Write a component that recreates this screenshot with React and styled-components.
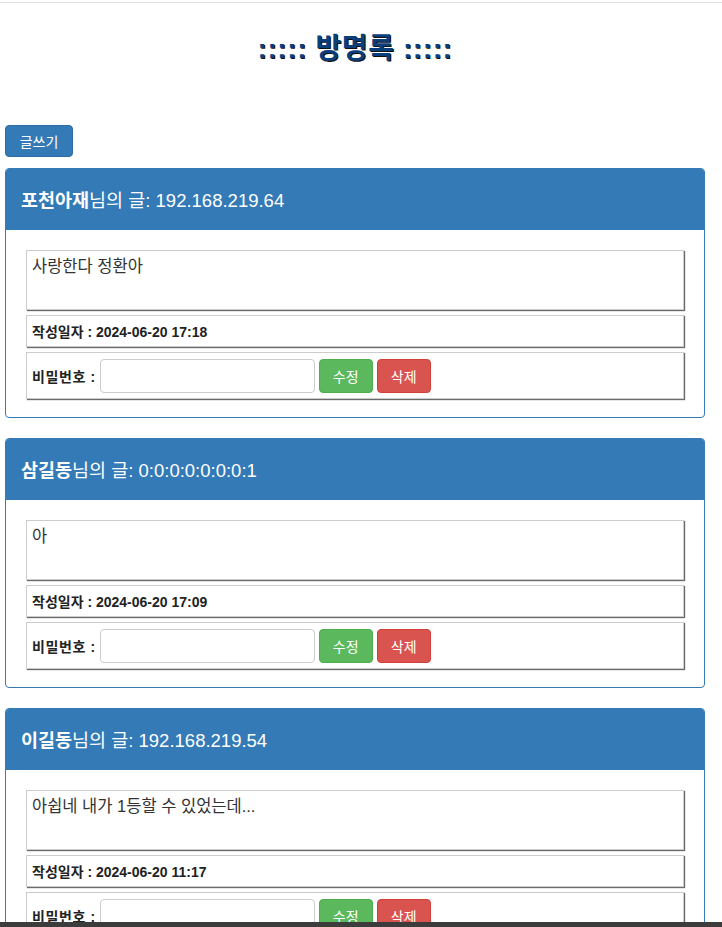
import React from 'react';
import styled, {createGlobalStyle} from 'styled-components';

const Global = createGlobalStyle`
  body {
    margin: 0;
    background: #fff;
    font-family: "Liberation Sans", "Noto Sans CJK KR", sans-serif;
    font-size: 14px;
    color: #333;
  }
`;

const TopRule = styled.div`
  margin-top: 2px;
  height: 1px;
  background: #e2e2e2;
`;

const Page = styled.div`
  width: 700px;
  margin: 0 5px;
`;

const Title = styled.h1`
  margin: 27px 0 0;
  height: 38px;
  text-align: center;
  font-size: 28px;
  letter-spacing: 0.6px;
  line-height: 38px;
  font-weight: bold;
  color: #0b3f7c;
  text-shadow: 1px 1px 0 #111;
`;

const WriteButton = styled.button`
  margin-top: 57px;
  width: 68px;
  height: 32px;
  border: 1px solid #2e6da4;
  border-radius: 4px;
  background: #337ab7;
  color: #fff;
  font: 14px "Liberation Sans", "Noto Sans CJK KR", sans-serif;
  padding: 0;
`;

const List = styled.div`
  margin-top: 11px;
  display: flex;
  flex-direction: column;
  gap: 20px;
`;

const Panel = styled.section`
  border: 1px solid #337ab7;
  border-radius: 4px;
  overflow: hidden;
`;

const PanelHeading = styled.header`
  height: 61px;
  display: flex;
  align-items: center;
  padding: 0 15px 2px;
  box-sizing: border-box;
  background: #337ab7;
  color: #fff;
  font-size: 18.5px;

  b {
    font-weight: bold;
  }
`;

const PanelBody = styled.div`
  padding: 20px 20px 18px;
  display: flex;
  flex-direction: column;
  gap: 5px;
`;

const Box = styled.div`
  border: 1px solid #ccc;
  box-shadow: 1px 1px 1px #6a6a6a;
  min-height: ${p => p.$h}px;
  box-sizing: border-box;
  display: flex;
  align-items: ${p => (p.$top ? 'flex-start' : 'center')};
  padding: ${p => (p.$top ? '5px 5px' : '0 5px')};
  gap: 4px;
`;

const Content = styled.div`
  font-size: 16.5px;
  line-height: 20px;
`;

const Meta = styled.div`
  font-size: 14px;
  font-weight: bold;
  color: #222;
`;

const Label = styled.label`
  font-size: 14px;
  letter-spacing: 0.6px;
  font-weight: bold;
  color: #222;
`;

const Input = styled.input`
  width: 215px;
  height: 34px;
  box-sizing: border-box;
  border: 1px solid #ccc;
  border-radius: 4px;
  padding: 6px 10px;
`;

const ActionButton = styled.button`
  width: 54px;
  height: 34px;
  border: 1px solid ${p => (p.$danger ? '#d43f3a' : '#4cae4c')};
  border-radius: 4px;
  background: ${p => (p.$danger ? '#d9534f' : '#5cb85c')};
  color: #fff;
  font: 14px "Liberation Sans", "Noto Sans CJK KR", sans-serif;
  padding: 0;
`;

const BottomBar = styled.div`
  position: fixed;
  left: 0;
  right: 0;
  bottom: 0;
  height: 5px;
  background: #3c3c3c;
`;

const posts = [
  {name: '포천아재', ip: '192.168.219.64', text: '사랑한다 정환아', date: '2024-06-20 17:18'},
  {name: '삼길동', ip: '0:0:0:0:0:0:0:1', text: '아', date: '2024-06-20 17:09'},
  {name: '이길동', ip: '192.168.219.54', text: '아쉽네 내가 1등할 수 있었는데...', date: '2024-06-20 11:17'},
];

export default function App() {
  return (
    <>
      <Global />
      <TopRule />
      <Page>
        <Title>::::: 방명록 :::::</Title>
        <WriteButton type="button">글쓰기</WriteButton>
        <List>
          {posts.map((post, i) => (
            <Panel key={i}>
              <PanelHeading>
                <b>{post.name}</b>님의 글: {post.ip}
              </PanelHeading>
              <PanelBody>
                <Box $h={60} $top>
                  <Content>{post.text}</Content>
                </Box>
                <Box $h={32}>
                  <Meta>작성일자 : {post.date}</Meta>
                </Box>
                <Box $h={47}>
                  <Label>비밀번호 :</Label>
                  <Input type="password" />
                  <ActionButton type="button">수정</ActionButton>
                  <ActionButton type="button" $danger>
                    삭제
                  </ActionButton>
                </Box>
              </PanelBody>
            </Panel>
          ))}
        </List>
      </Page>
      <BottomBar />
    </>
  );
}
